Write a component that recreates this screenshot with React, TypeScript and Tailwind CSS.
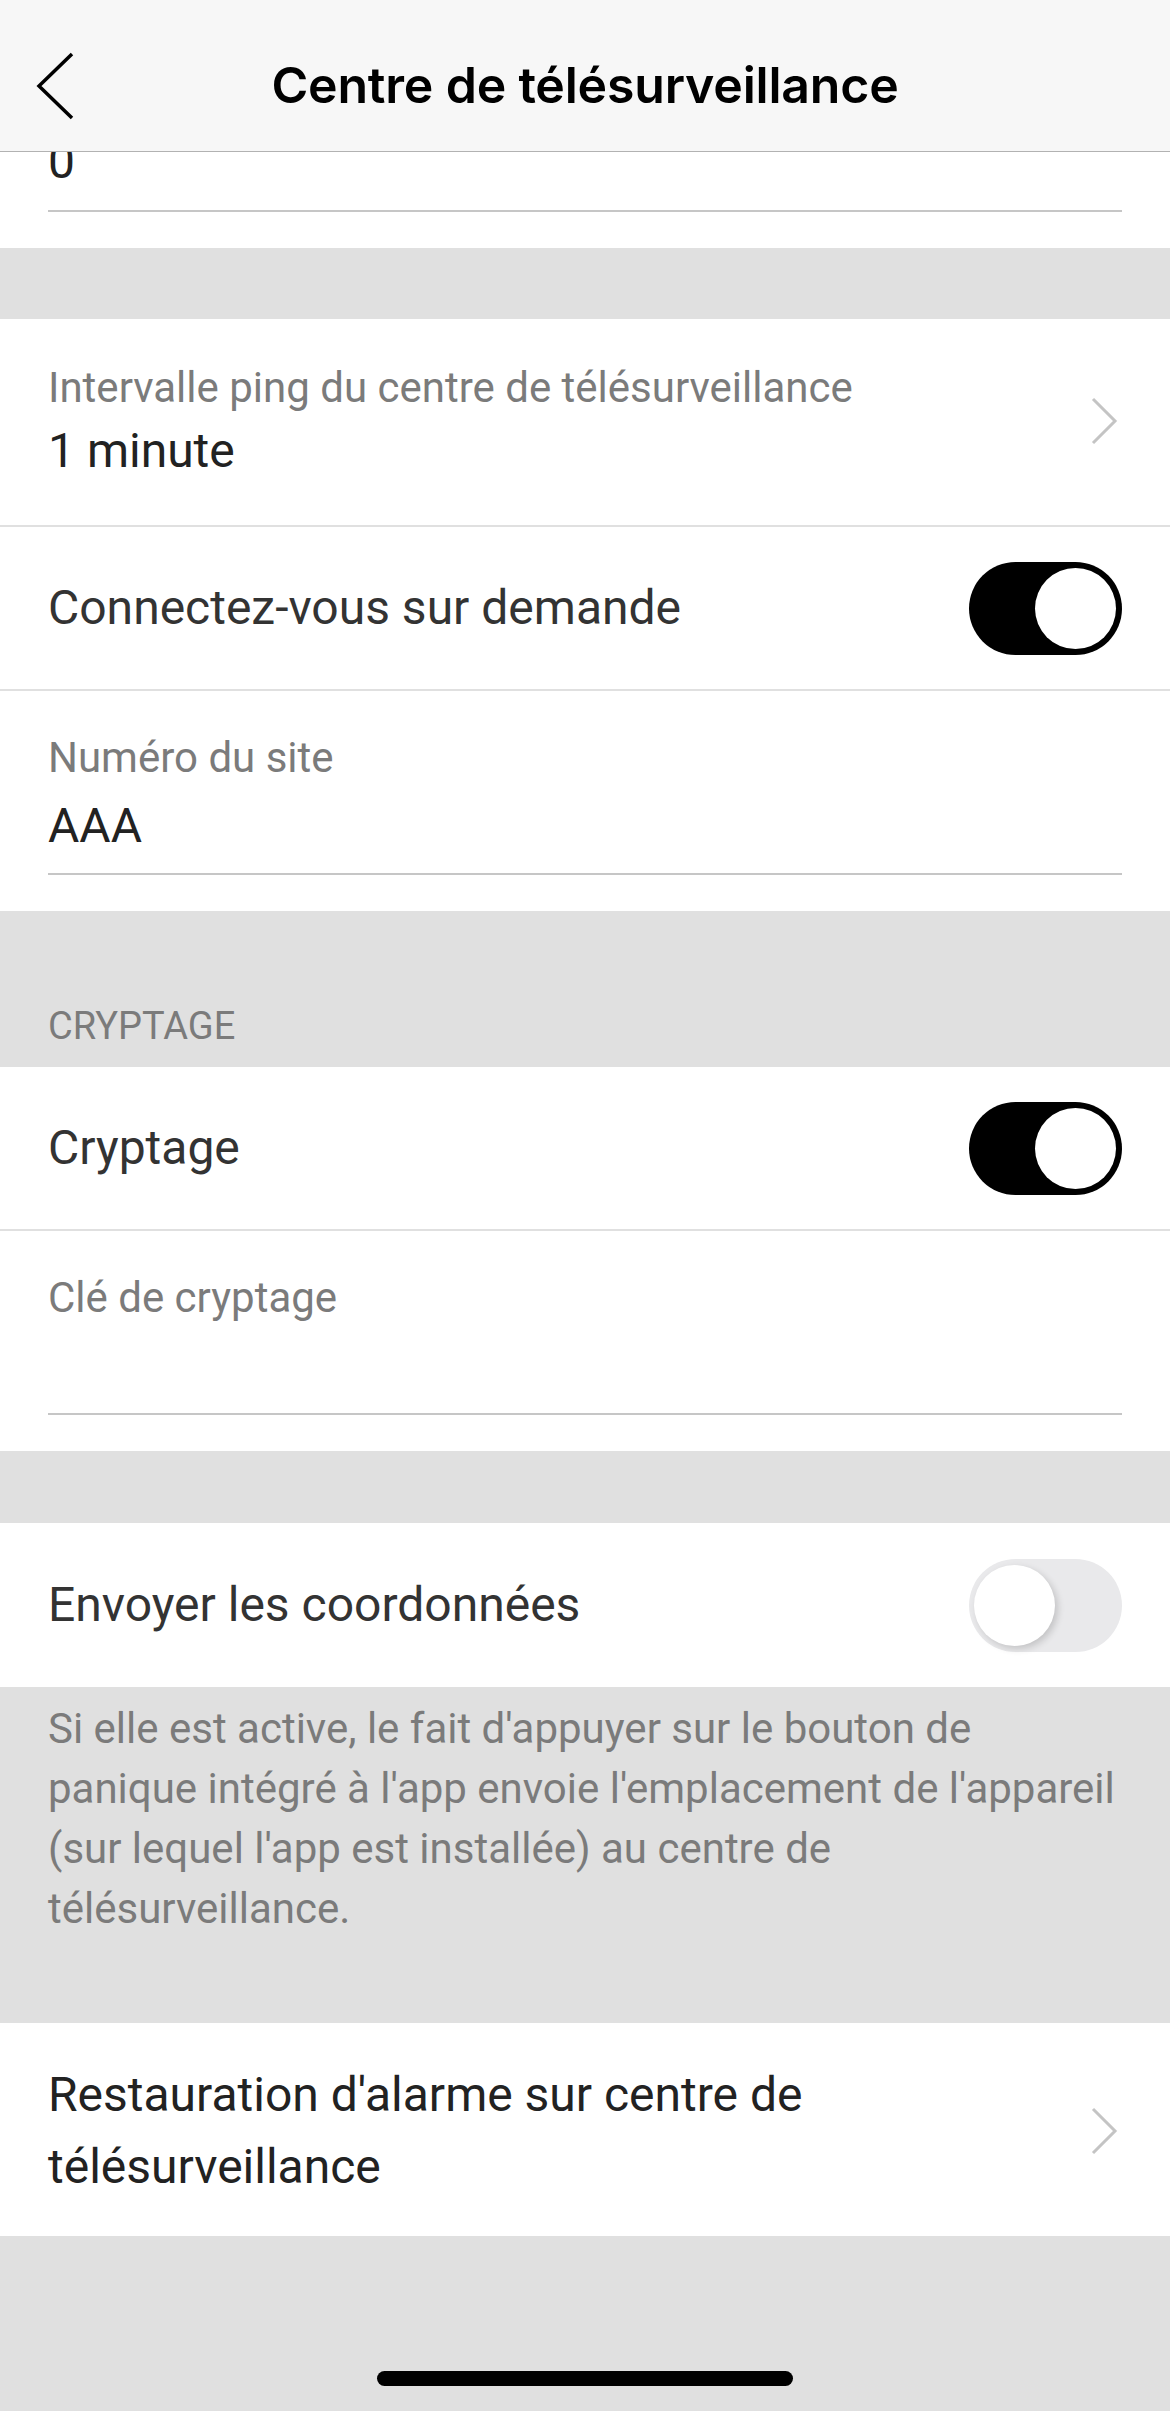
import React from 'react';

function Toggle({ on }: { on: boolean }) {
  if (on) {
    return (
      <div className="relative w-[153px] h-[93px] rounded-full bg-black shrink-0">
        <div className="absolute right-[6px] top-[6px] w-[81px] h-[81px] rounded-full bg-white" />
      </div>
    );
  }
  return (
    <div className="relative w-[153px] h-[93px] rounded-full bg-[#e9e9eb] shrink-0">
      <div className="absolute left-[5px] top-[6px] w-[81px] h-[81px] rounded-full bg-white shadow-[3px_3px_7px_rgba(0,0,0,0.16)]" />
    </div>
  );
}

function Chevron() {
  return (
    <svg width="28" height="48" viewBox="0 0 28 48" className="shrink-0">
      <polyline points="3,2 25,24 3,46" fill="none" stroke="#c4c4c4" strokeWidth="3" />
    </svg>
  );
}

function ToggleRow({ label, on, border }: { label: string; on: boolean; border?: boolean }) {
  return (
    <div className={`h-[164px] flex items-center justify-between px-[48px] bg-white ${border ? 'border-b-2 border-[#e0e0e0]' : ''}`}>
      <span className="text-[48px] leading-[56px] text-[#333]">{label}</span>
      <Toggle on={on} />
    </div>
  );
}

function Field({ label, value, pt = 'pt-[42px]' }: { label: string; value: string; pt?: string }) {
  return (
    <div className={`bg-white px-[48px] ${pt} pb-[36px]`}>
      <div className="text-[42px] leading-[50px] text-[#7b7b7b]">{label}</div>
      <div className="mt-[15px] h-[56px] text-[48px] leading-[56px] text-[#222]">{value}</div>
      <div className="mt-[19px] h-[2px] bg-[#c6c6c6]" />
    </div>
  );
}

export default function App() {
  return (
    <div className="min-h-[2411px] flex flex-col bg-[#e0e0e0] font-['Roboto',sans-serif]">
      <header className="sticky top-0 z-10 h-[152px] shrink-0 bg-[#f7f7f7] border-b border-[#b2b2b2] grid grid-cols-[1fr_auto_1fr] items-center pt-[20px]">
        <div className="pl-[36px]">
          <svg width="40" height="68" viewBox="0 0 40 68">
            <polyline points="36,2 3,34 36,66" fill="none" stroke="#000" strokeWidth="3.5" />
          </svg>
        </div>
        <h1 className="font-['Inter',sans-serif] font-semibold text-[50px] tracking-[-0.2px] text-black">
          Centre de télésurveillance
        </h1>
        <div />
      </header>

      <div className="-mt-[18px] bg-white px-[48px] pb-[36px]">
        <div className="h-[56px] text-[48px] leading-[56px] text-[#222]">0</div>
        <div className="mt-[20px] h-[2px] bg-[#c6c6c6]" />
      </div>

      <div className="h-[71px]" />

      <div className="bg-white pl-[48px] pr-[52px] pt-[44px] pb-[46px] border-b-2 border-[#e0e0e0] flex items-center justify-between">
        <div>
          <div className="text-[42px] leading-[50px] text-[#7b7b7b]">Intervalle ping du centre de télésurveillance</div>
          <div className="mt-[10px] text-[48px] leading-[56px] text-[#222]">1 minute</div>
        </div>
        <Chevron />
      </div>

      <ToggleRow label="Connectez-vous sur demande" on border />

      <Field label="Numéro du site" value="AAA" />

      <div className="px-[48px] pt-[93px] pb-[19px]">
        <div className="text-[38px] leading-[44px] text-[#7b7b7b]">CRYPTAGE</div>
      </div>

      <ToggleRow label="Cryptage" on border />

      <Field label="Clé de cryptage" value="" />

      <div className="h-[72px]" />

      <ToggleRow label="Envoyer les coordonnées" on={false} />

      <div className="px-[48px] pt-[12px] pb-[84px] text-[42px] leading-[60px] text-[#7b7b7b] whitespace-nowrap">
        <div>Si elle est active, le fait d'appuyer sur le bouton de</div>
        <div>panique intégré à l'app envoie l'emplacement de l'appareil</div>
        <div>(sur lequel l'app est installée) au centre de</div>
        <div>télésurveillance.</div>
      </div>

      <div className="bg-white pl-[48px] pr-[52px] pt-[36px] pb-[33px] flex items-center justify-between">
        <div className="text-[48px] leading-[72px] text-[#222]">
          <div>Restauration d'alarme sur centre de</div>
          <div>télésurveillance</div>
        </div>
        <Chevron />
      </div>

      <div className="flex-1 flex flex-col justify-end items-center pb-[25px]">
        <div className="w-[416px] h-[15px] rounded-full bg-black" />
      </div>
    </div>
  );
}
